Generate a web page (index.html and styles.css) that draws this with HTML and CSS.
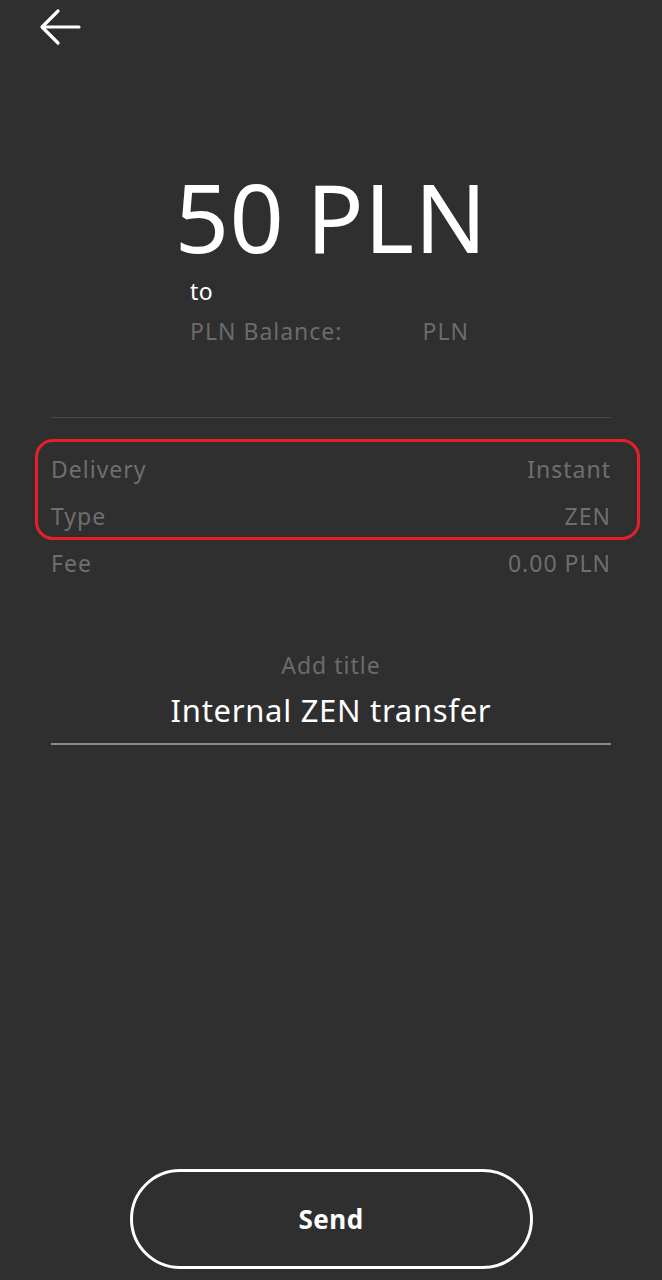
FILE: index.html
```html
<!DOCTYPE html>
<html>
<head>
<meta charset="utf-8">
<link rel="stylesheet" href="styles.css">
</head>
<body>
<div class="screen">
  <header class="topbar">
    <svg class="back" width="44" height="40" viewBox="0 0 44 40" fill="none" stroke="#fff" stroke-width="3.2" stroke-linecap="round" stroke-linejoin="round">
      <path d="M41 21H5"/>
      <path d="M20 5L4 21L20 37"/>
    </svg>
  </header>

  <section class="amount-block">
    <div class="amount">50<span class="cur">PLN</span></div>
    <div class="sub">
      <div class="to">to</div>
      <div class="balance"><span>PLN Balance:</span><span class="bal-cur">PLN</span></div>
    </div>
  </section>

  <div class="divider"></div>

  <section class="details">
    <div class="highlight">
      <div class="row"><span>Delivery</span><span>Instant</span></div>
      <div class="row"><span>Type</span><span>ZEN</span></div>
    </div>
    <div class="row fee"><span>Fee</span><span>0.00 PLN</span></div>
  </section>

  <section class="title-block">
    <div class="title-label">Add title</div>
    <div class="title-value">Internal ZEN transfer</div>
  </section>

  <div class="spacer"></div>

  <div class="actions">
    <button class="send">Send</button>
  </div>
</div>
</body>
</html>
```

FILE: styles.css
```css
html, body {
  margin: 0;
  padding: 0;
  background: #2f2f2f;
}
body {
  font-family: "Noto Sans", "Open Sans", sans-serif;
  color: #fff;
}
.screen {
  width: 662px;
  height: 1280px;
  display: flex;
  flex-direction: column;
  box-sizing: border-box;
  padding: 0 51px;
}
.topbar {
  height: 60px;
  margin-left: -13px;
  padding-top: 6px;
  box-sizing: border-box;
}
.back { display: block; }
.amount-block {
  margin-top: 110px;
  display: flex;
  flex-direction: column;
  align-items: center;
}
.amount {
  font-size: 95px;
  line-height: 92px;
  font-weight: 400;
  letter-spacing: 0.5px;
}
.amount .cur { margin-left: 22px; }
.sub {
  align-self: flex-start;
  margin-left: 139px;
  margin-top: 14px;
}
.to {
  font-size: 23px;
  line-height: 30px;
  letter-spacing: 0.5px;
}
.balance {
  margin-top: 10px;
  font-size: 23px;
  line-height: 30px;
  letter-spacing: 1px;
  color: #6b6b6b;
  display: flex;
  gap: 80px;
}
.divider {
  margin-top: 71px;
  height: 1px;
  background: #484848;
}
.details {
  margin-top: 21px;
  display: flex;
  flex-direction: column;
}
.highlight {
  border: 3px solid #e81f2b;
  border-radius: 18px;
  margin: 0 -29px 0 -16px;
  padding: 7px 26px 1px 13px;
  display: flex;
  flex-direction: column;
  gap: 7px;
}
.row {
  display: flex;
  justify-content: space-between;
  font-size: 23px;
  line-height: 40px;
  letter-spacing: 1px;
  color: #6e6e6e;
}
.fee { margin-top: 3px; }
.title-block {
  margin-top: 67px;
  display: flex;
  flex-direction: column;
  align-items: center;
  border-bottom: 2px solid #8a8a8a;
  padding-bottom: 11px;
}
.title-label {
  font-size: 23px;
  line-height: 30px;
  letter-spacing: 1px;
  color: #6b6b6b;
}
.title-value {
  margin-top: 8px;
  font-size: 31px;
  line-height: 44px;
  letter-spacing: 0.7px;
  color: #fff;
}
.spacer { flex: 1; }
.actions {
  display: flex;
  justify-content: center;
  padding-bottom: 11px;
}
.send {
  width: 403px;
  height: 100px;
  border: 3px solid #fff;
  border-radius: 50px;
  background: transparent;
  color: #fff;
  font-family: inherit;
  font-size: 26px;
  font-weight: 700;
  letter-spacing: 0.5px;
  cursor: pointer;
}
```
